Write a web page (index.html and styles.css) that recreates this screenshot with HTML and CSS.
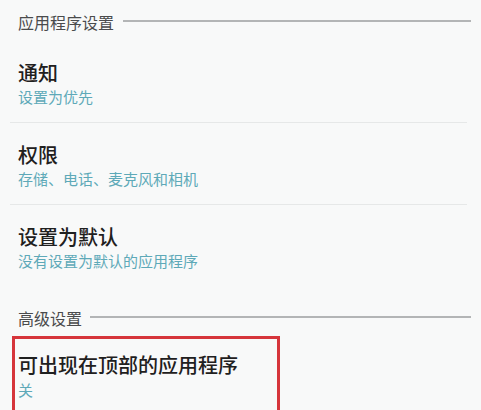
FILE: index.html
```html
<!DOCTYPE html>
<html lang="zh-CN">
<head>
<meta charset="utf-8">
<link rel="stylesheet" href="styles.css">
</head>
<body>
<div class="page">
  <div class="section-head head-first">
    <span class="head-text">应用程序设置</span>
    <span class="head-line"></span>
  </div>
  <div class="item item-first">
    <div class="title">通知</div>
    <div class="sub">设置为优先</div>
  </div>
  <div class="divider"></div>
  <div class="item">
    <div class="title">权限</div>
    <div class="sub">存储、电话、麦克风和相机</div>
  </div>
  <div class="divider"></div>
  <div class="item">
    <div class="title">设置为默认</div>
    <div class="sub">没有设置为默认的应用程序</div>
  </div>
  <div class="section-head head-second">
    <span class="head-text">高级设置</span>
    <span class="head-line"></span>
  </div>
  <div class="highlight">
    <div class="title">可出现在顶部的应用程序</div>
    <div class="sub sub-tight">关</div>
  </div>
</div>
</body>
</html>
```

FILE: styles.css
```css
html, body {
  margin: 0;
  padding: 0;
  overflow: hidden;
  background: #f8f9f9;
}
body {
  font-family: "Noto Sans CJK SC", "Noto Sans", sans-serif;
  width: 481px;
  height: 410px;
}
.page {
  display: flex;
  flex-direction: column;
  padding-top: 12px;
}
.section-head {
  display: flex;
  align-items: center;
  gap: 9px;
  height: 20px;
  padding: 0 10px 0 18px;
}
.head-second {
  margin-top: 22px;
  gap: 8px;
}
.head-text {
  font-size: 16px;
  line-height: 20px;
  color: #4a4b4c;
  white-space: nowrap;
}
.head-line {
  flex: 1;
  height: 2px;
  margin-top: -2px;
  background: #b3b5b6;
}
.item {
  padding: 20px 0 15px 18px;
}
.item-first {
  margin-top: 9px;
}
.title {
  font-size: 20px;
  line-height: 24px;
  font-weight: 500;
  color: #1f2020;
}
.sub {
  margin-top: 2px;
  font-size: 15px;
  line-height: 20px;
  color: #5ea9b8;
}
.sub-tight {
  margin-top: 3px;
}
.divider {
  height: 1px;
  margin: 0 14px 0 10px;
  background: #e6e8e8;
}
.highlight {
  margin: 8px 0 0 12px;
  width: 259px;
  height: 100px;
  border: 3px solid #d6353b;
  padding: 14px 0 0 3px;
}
```
